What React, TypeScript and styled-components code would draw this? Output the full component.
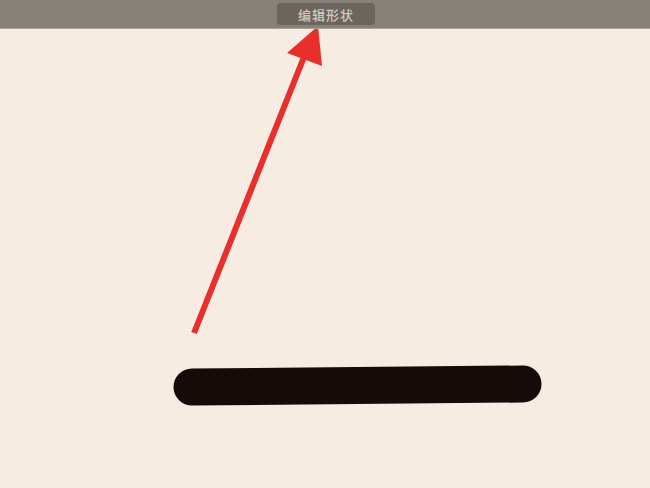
import React from 'react';
import styled, { createGlobalStyle } from 'styled-components';

const GlobalStyle = createGlobalStyle`
  html, body {
    margin: 0;
    padding: 0;
    background: #f6ece2;
  }
`;

const Page = styled.div`
  width: 650px;
  height: 488px;
  display: flex;
  flex-direction: column;
  background: #f6ece2;
  overflow: hidden;
`;

const Toolbar = styled.div`
  height: 28px;
  flex-shrink: 0;
  display: flex;
  justify-content: center;
  align-items: flex-start;
  background: #888179;
  border-bottom: 1px solid #a8a29b;
  box-sizing: content-box;
`;

const ToolButton = styled.div`
  margin-top: 3px;
  margin-left: 2px;
  width: 98px;
  height: 22px;
  display: flex;
  align-items: center;
  justify-content: center;
  background: #6c655d;
  border-radius: 4px;
  color: #cfcac3;
  font-family: 'Noto Sans CJK SC', 'Noto Sans', sans-serif;
  font-size: 13px;
  font-weight: 500;
  letter-spacing: 1px;
`;

const Canvas = styled.div`
  flex: 1;
  position: relative;
`;

const Drawing = styled.svg`
  display: block;
  width: 100%;
  height: 100%;
`;

const App = () => (
  <Page>
    <GlobalStyle />
    <Toolbar>
      <ToolButton>编辑形状</ToolButton>
    </Toolbar>
    <Canvas>
      <Drawing viewBox="0 29 650 459" preserveAspectRatio="none">
        {/* brush stroke */}
        <line
          x1="192"
          y1="387"
          x2="523"
          y2="384"
          stroke="#160b09"
          strokeWidth="37"
          strokeLinecap="round"
        />
        {/* red arrow */}
        <line
          x1="194"
          y1="333"
          x2="306"
          y2="52"
          stroke="#e7302b"
          strokeWidth="6"
        />
        <polygon points="318,26 287,53 322,66" fill="#e7302b" />
      </Drawing>
    </Canvas>
  </Page>
);

export default App;
